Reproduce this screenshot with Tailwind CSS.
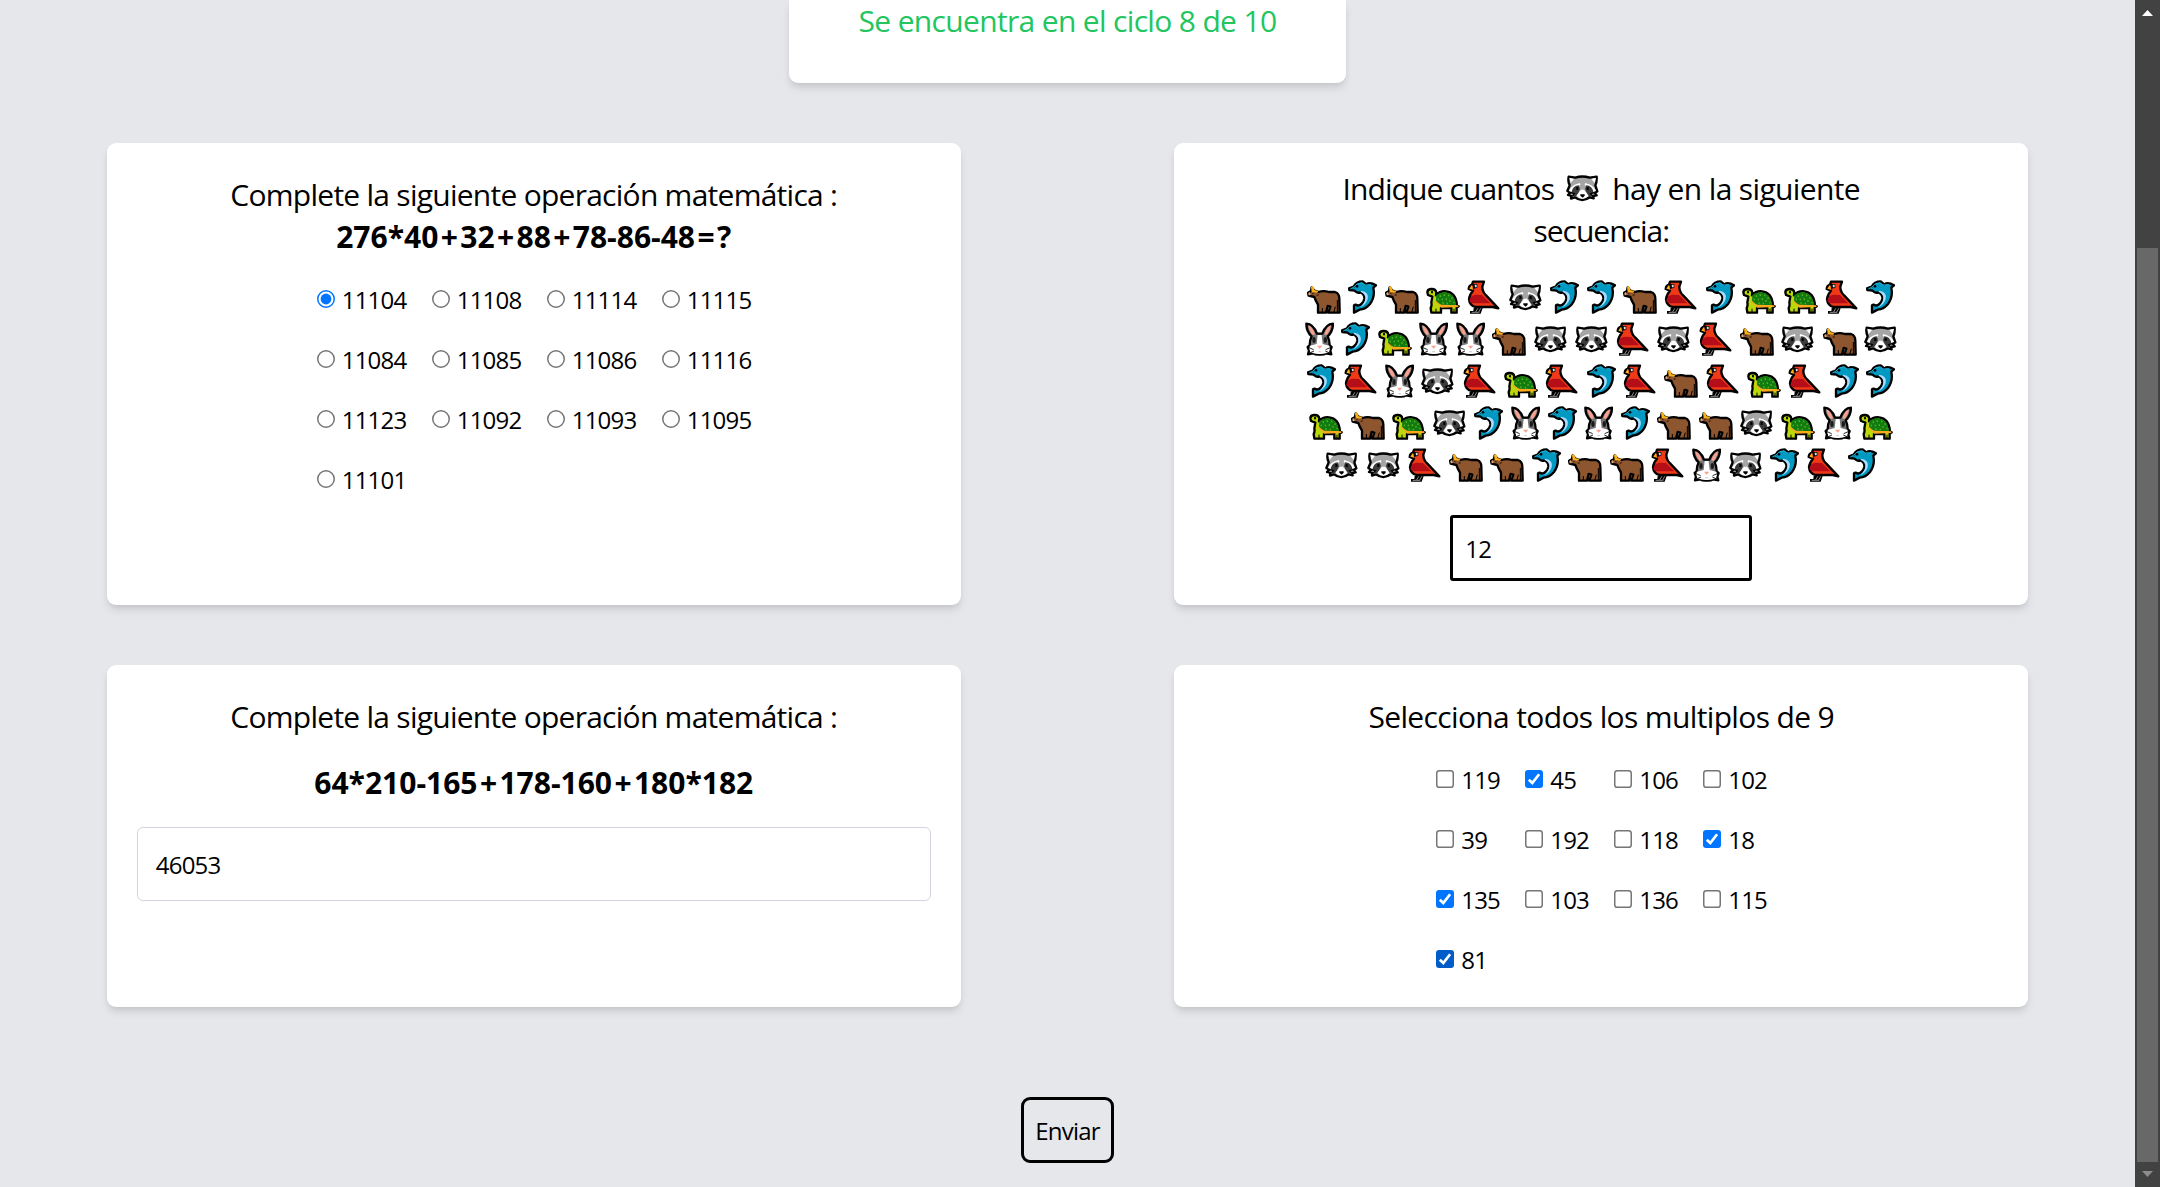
<!DOCTYPE html>
<html lang="es">
<head>
<meta charset="utf-8">
<title>Ciclo 8 de 10</title>
<script src="https://cdn.jsdelivr.net/npm/@tailwindcss/browser@4"></script>
</head>
<body class="flex h-[1187px] w-[2160px] overflow-hidden bg-[#e5e7eb] font-['Open_Sans','Noto_Sans',sans-serif] text-[24px] leading-[36px] text-black">

<svg class="hidden">
  <symbol id="ox" viewBox="0 0 102 102">
    <path d="M14 22 L23 33 Q29 31 34 36 Q50 31 66 36 H84 Q97 40 97 56 L98 98 H64 L70 80 L62 78 L57 98 H33 V74 L26 61 L22 51 L5 47 L3 38 L12 33Z" fill="#8e562e" stroke="#000" stroke-width="7" stroke-linejoin="round"/>
    <path d="M12 20 L18 19 L23 31 L34 32 L31 38 L14 36Z" fill="#fbb117"/>
    <path d="M4 39 L9 36 L11 45 L5 46Z" fill="#e5a77f"/>
    <path d="M15 39 h5 v4 h-5z M28 45 L34 41 L36 46 L30 49Z" fill="#4b2a13"/>
    <path d="M46 84 V98 M85 80 L80 98 M91 60 V98" stroke="#000" stroke-width="3" fill="none"/>
  </symbol>
  <symbol id="dolphin" viewBox="0 0 88 102">
    <path d="M3 25 L17 20 Q25 4 44 4 L55 13 Q66 5 84 16 L76 23 Q82 50 66 72 Q53 88 35 89 L18 98 V76 Q22 72 30 77 Q46 72 49 56 Q50 42 37 37 Q28 41 20 32 L4 30Z" fill="#0099c1" stroke="#000" stroke-width="7" stroke-linejoin="round"/>
    <path d="M7 27 L18 21 Q25 9 43 8 L50 15 L70 14" fill="none" stroke="#27b5da" stroke-width="3"/>
    <path d="M40 32 Q64 35 59 58 Q53 76 36 82 Q53 68 52 52 Q50 40 37 35Z" fill="#a9dcff"/>
    <circle cx="27" cy="19" r="4" fill="#000"/>
  </symbol>
  <symbol id="turtle" viewBox="0 0 102 102">
    <path d="M4 37 Q4 28 15 27 Q30 26 31 38 L30 46 Q42 32 60 34 Q90 37 93 76 L98 79 L92 83 V98 H76 V84 H45 V98 H16 L14 84 Q18 78 16 67 L19 50 L6 45Z" fill="#bad80a" stroke="#000" stroke-width="7" stroke-linejoin="round"/>
    <path d="M31 45 Q43 35 59 37 Q86 40 90 75 L49 76 Q34 72 30 63Z" fill="#107c10"/>
    <path d="M28 61 Q37 70 45 74 L97 76 V81 L45 83 Q39 74 28 67Z" fill="#fba91c"/>
    <path d="M43 46 v5 M55 43 v5 M68 44 v5 M78 52 v5 M37 56 v5 M49 56 v5 M61 55 v5 M72 60 v5 M84 65 v5 M51 67 v5 M64 68 v5" stroke="#5fae24" stroke-width="4"/>
    <path d="M30 86 V98 M84 86 V98" stroke="#000" stroke-width="3"/>
    <ellipse cx="18" cy="36" rx="3" ry="4.5" fill="#000"/>
  </symbol>
  <symbol id="cardinal" viewBox="0 0 102 102">
    <path d="M20 84 H47 L41 101 H9 V93 H19Z" fill="#000"/>
    <path d="M33 84 L26 96 M42 84 L35 96 M14 97 H37" stroke="#8b8b8b" stroke-width="3"/>
    <path d="M18 5 H51 L46 20 Q46 36 58 47 L94 85 L77 81 H25 Q8 76 6 58 Q7 44 18 32 L5 27 Q6 16 15 14Z" fill="#f03a17" stroke="#000" stroke-width="7" stroke-linejoin="round"/>
    <path d="M7 62 Q12 44 26 44 L45 45 L70 70 H18 Q9 68 7 62Z" fill="#b50e18"/>
    <path d="M7 26 L15 14 L18 29Z" fill="#fbb117"/>
    <path d="M17 12 H31 V23 L18 27Z" fill="#000"/>
    <path d="M23 14 H29 V22 H24Z" fill="#dcdcdc"/>
  </symbol>
  <symbol id="raccoon" viewBox="0 0 102 102">
    <path d="M8 17 L28 20 Q49 13 71 20 L92 17 Q93 34 88 43 L94 61 L86 65 L92 73 L82 75 L83 82 L72 79 Q60 87 49 87 Q37 87 27 79 L15 83 L16 75 L6 72 L13 65 L4 60 L11 43 Q5 31 8 17Z" fill="#a5a5a5" stroke="#000" stroke-width="7" stroke-linejoin="round"/>
    <path d="M10 20 L24 24 L14 36Z M90 20 L76 24 L86 36Z" fill="#fff"/>
    <path d="M9 60 Q15 42 42 36 L43 43 Q22 46 17 63Z M90 60 Q84 42 57 36 L56 43 Q77 46 82 63Z" fill="#fff"/>
    <path d="M17 62 Q21 44 38 43 L42 54 L33 76 L24 76Z M82 62 Q78 44 61 43 L57 54 L66 76 L75 76Z" fill="#3b3b3b"/>
    <path d="M31 48 h6 v9 h-6z M62 48 h6 v9 h-6z" fill="#000"/>
    <path d="M45 56 H54 L68 74 Q58 84 49 84 Q40 84 31 74Z" fill="#fff"/>
    <path d="M43 70 H56 V74 L50 80 L43 74Z" fill="#000"/>
    <path d="M12 64 L25 68 L19 76 M87 64 L74 68 L80 76" stroke="#000" stroke-width="4" fill="none"/>
  </symbol>
  <symbol id="rabbit" viewBox="0 0 88 102">
    <path d="M4 5 Q25 6 36 35 H52 Q63 6 84 5 Q84 29 68 43 Q74 55 74 69 L80 75 L76 86 L79 97 L64 94 Q56 99 44 98 Q32 99 24 94 L9 97 L12 86 L8 75 L14 69 Q14 55 20 43 Q4 29 4 5Z" fill="#767676" stroke="#000" stroke-width="7" stroke-linejoin="round"/>
    <path d="M10 10 Q22 13 30 37 L23 39 Q12 27 10 10Z M78 10 Q66 13 58 37 L65 39 Q76 27 78 10Z" fill="#f9a08f"/>
    <path d="M38 39 H50 L53 66 L73 71 L75 80 L72 90 Q58 97 44 96 Q30 97 16 90 L13 80 L15 71 L35 66Z" fill="#fff"/>
    <ellipse cx="27" cy="54" rx="5" ry="9" fill="#1b1b1b"/><ellipse cx="61" cy="54" rx="5" ry="9" fill="#1b1b1b"/>
    <path d="M36 71 H52 L44 80Z" fill="#f9a08f"/>
    <path d="M12 77 L26 83 M16 92 L27 87 M76 77 L62 83 M72 92 L61 87" stroke="#000" stroke-width="2.5"/>
    <path d="M38 91 Q44 83 50 91" fill="#c9c9c9"/>
  </symbol>
  <symbol id="radio" viewBox="0 0 18 18"><circle cx="9" cy="9" r="8.25" fill="#fff" stroke="#767676" stroke-width="1.5"/></symbol>
  <symbol id="radio-on" viewBox="0 0 18 18"><circle cx="9" cy="9" r="8.25" fill="#fff" stroke="#0075ff" stroke-width="1.5"/><circle cx="9" cy="9" r="5.4" fill="#0075ff"/></symbol>
  <symbol id="box" viewBox="0 0 18 18"><rect x=".75" y=".75" width="16.5" height="16.5" rx="2.6" fill="#fff" stroke="#767676" stroke-width="1.5"/></symbol>
  <symbol id="box-on" viewBox="0 0 18 18"><rect width="18" height="18" rx="3" fill="currentColor"/><path d="M3.8 9.8 L7.3 13.1 L14.1 4.2" fill="none" stroke="#fff" stroke-width="2.7"/></symbol>
</svg>

<main class="flex w-[2135px] flex-none flex-col items-center">
  <header class="h-[83px] w-[557px] flex-none rounded-b-[9px] bg-white text-center shadow-[0_6px_9px_-1.5px_rgb(0_0_0/0.1),0_3px_6px_-3px_rgb(0_0_0/0.1)]">
    <p class="text-[30px] leading-[42px] tracking-[-0.66px] text-[#22c55e]">Se encuentra en el ciclo 8 de 10</p>
  </header>

  <div class="mt-[60px] grid w-full grid-cols-[854px_854px] grid-rows-[462px_342px] justify-around gap-y-[60px]">
    <section class="flex flex-col items-center rounded-[9px] bg-white pt-[31px] shadow-[0_6px_9px_-1.5px_rgb(0_0_0/0.1),0_3px_6px_-3px_rgb(0_0_0/0.1)]">
      <h2 class="text-[30px] leading-[42px] tracking-[-0.74px]">Complete la siguiente operación matemática :</h2>
      <p class="text-[30px] leading-[42px] font-bold">276*40<span class="px-[2.4px]">+</span>32<span class="px-[2.4px]">+</span>88<span class="px-[2.4px]">+</span>78-86-48<span class="px-[2.4px]">=</span>?</p>
      <div id="radios" class="mt-[24px] ml-[3px] grid w-[437px] grid-cols-[repeat(4,115px)] gap-y-6"></div>
    </section>

    <section class="flex flex-col items-center rounded-[9px] bg-white pt-[25px] shadow-[0_6px_9px_-1.5px_rgb(0_0_0/0.1),0_3px_6px_-3px_rgb(0_0_0/0.1)]">
      <h2 class="flex h-[42px] text-[30px] leading-[42px]">
        <span class="tracking-[-0.88px]">Indique cuantos</span>
        <svg class="mx-[12px] mt-[3px] h-[34px] w-[34px]"><use href="#raccoon"/></svg>
        <span class="tracking-[-0.63px]">hay en la siguiente</span>
      </h2>
      <p class="text-[30px] leading-[42px] tracking-[-1px]">secuencia:</p>
      <div id="animals" class="mt-[28px] flex flex-col gap-2"></div>
      <div class="mt-[33px] flex h-[66px] w-[302px] items-center rounded-[3px] border-[3px] border-black bg-white pt-px pl-[12px] tracking-[-0.77px]">12</div>
    </section>

    <section class="flex flex-col items-center rounded-[9px] bg-white px-[30px] pt-[31px] shadow-[0_6px_9px_-1.5px_rgb(0_0_0/0.1),0_3px_6px_-3px_rgb(0_0_0/0.1)]">
      <h2 class="text-[30px] leading-[42px] tracking-[-0.74px]">Complete la siguiente operación matemática :</h2>
      <p class="mt-6 text-[30px] leading-[42px] font-bold">64*210-165<span class="px-[2.4px]">+</span>178-160<span class="px-[2.4px]">+</span>180*182</p>
      <div class="mt-[23px] flex h-[74px] w-full items-center rounded-[6px] border border-gray-300 bg-white pt-px pl-[18px] tracking-[-0.77px]">46053</div>
    </section>

    <section class="flex flex-col items-center rounded-[9px] bg-white pt-[31px] shadow-[0_6px_9px_-1.5px_rgb(0_0_0/0.1),0_3px_6px_-3px_rgb(0_0_0/0.1)]">
      <h2 class="text-[30px] leading-[42px] tracking-[-0.64px]">Selecciona todos los multiplos de 9</h2>
      <div id="checks" class="mt-[24px] ml-[2px] grid w-[332px] grid-cols-[repeat(4,89px)] gap-y-6"></div>
    </section>
  </div>

  <button class="mt-[90px] flex h-[66px] w-[93px] flex-none items-center justify-center rounded-[9px] border-[3px] border-black pt-[2px] tracking-[-0.8px]">Enviar</button>
</main>

<aside class="flex w-[25px] flex-none flex-col items-center justify-between bg-[#424242]">
  <svg class="mt-[10px] h-[6px] w-[11px]" viewBox="0 0 11 6"><path d="M5.5 0 L11 6 H0Z" fill="#fff"/></svg>
  <div class="mt-[232px] w-[21px] flex-1 bg-[#686868]"></div>
  <svg class="mt-[9px] mb-[10px] h-[6px] w-[11px]" viewBox="0 0 11 6"><path d="M0 0 H11 L5.5 6Z" fill="#8c8c8c"/></svg>
</aside>

<script>
  const option = (icon, label, color) =>
    `<label class="flex h-[36px]"><svg class="mt-[8px] mr-[7px] h-[18px] w-[18px] flex-none ${color}"><use href="#${icon}"/></svg><span class="tracking-[-0.8px]">${label}</span></label>`;

  document.getElementById('radios').innerHTML =
    [11104, 11108, 11114, 11115, 11084, 11085, 11086, 11116, 11123, 11092, 11093, 11095, 11101]
      .map((n, i) => option(i === 0 ? 'radio-on' : 'radio', n, '')).join('');

  document.getElementById('checks').innerHTML =
    [119, 45, 106, 102, 39, 192, 118, 18, 135, 103, 136, 115, 81]
      .map(n => option(n % 9 === 0 ? 'box-on' : 'box', n, n === 81 ? 'text-[#005cc8]' : 'text-[#0075ff]')).join('');

  const names = { O: 'ox', D: 'dolphin', T: 'turtle', C: 'cardinal', R: 'raccoon', B: 'rabbit' };
  document.getElementById('animals').innerHTML =
    ['ODOTCRDDOCDTTCD', 'BDTBBORRCRCOROR', 'DCBRCTCDCOCTCDD', 'TOTRDBDBDOORTBT', 'RRCOODOOCBRDCD']
      .map(row => `<div class="flex justify-center gap-[7.3px]">${[...row].map(c =>
        `<svg class="h-[34px] flex-none ${c === 'D' || c === 'B' ? 'w-[29.3px]' : 'w-[34px]'}"><use href="#${names[c]}"/></svg>`).join('')}</div>`).join('');
</script>
</body>
</html>
